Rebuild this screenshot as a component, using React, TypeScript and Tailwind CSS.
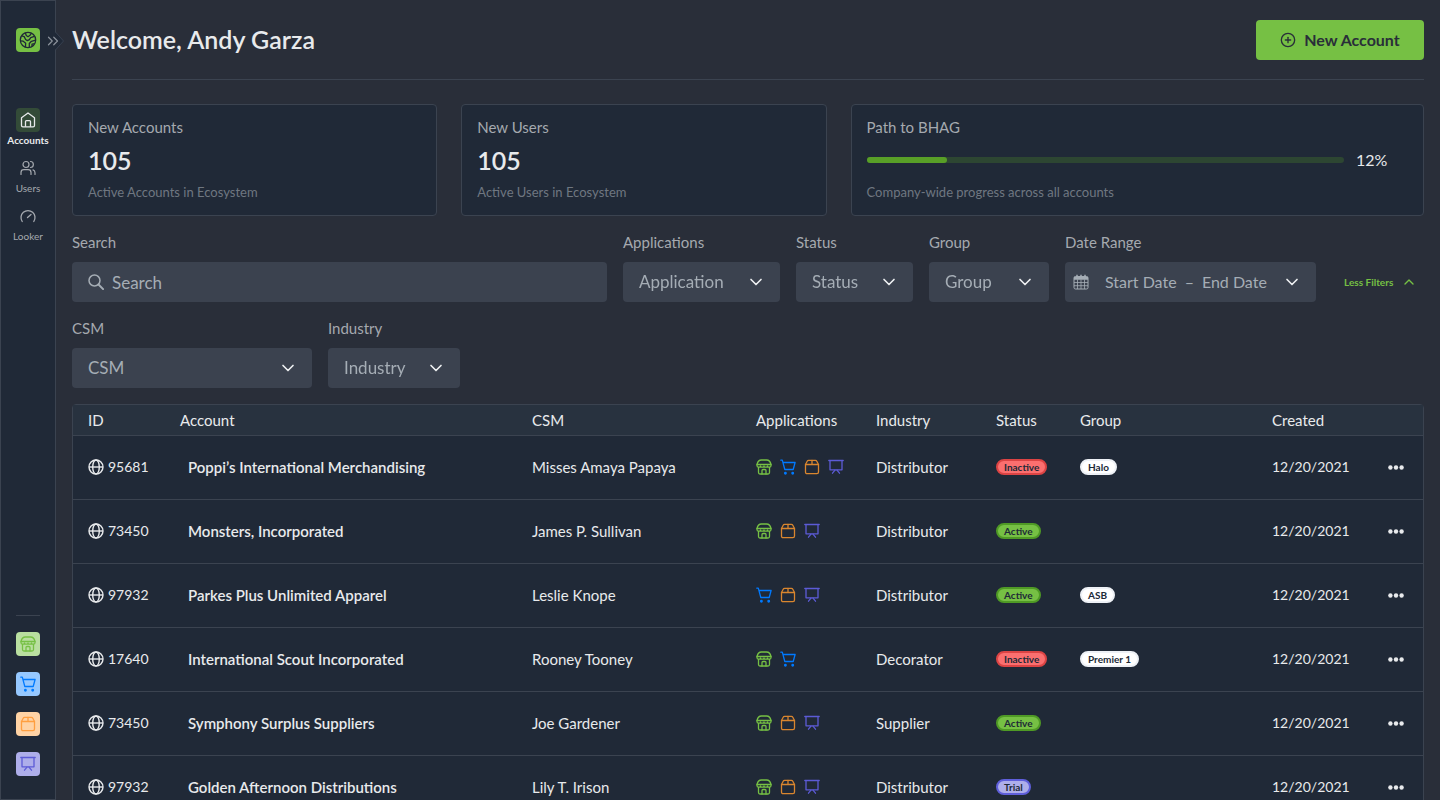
import React from "react";
import { ChevronDown, ChevronUp, ChevronsRight, CirclePlus } from "lucide-react";

type AppName = "store" | "cart" | "box" | "board";

const appColors: Record<AppName, string> = {
  store: "text-[#76c044]",
  cart: "text-[#007aff]",
  box: "text-[#d9862f]",
  board: "text-[#5c5bd6]",
};

const shortcuts: { app: AppName; label: string; className: string }[] = [
  { app: "store", label: "Stores", className: "bg-[#b9dfa0] text-[#76c044]" },
  { app: "cart", label: "Orders", className: "bg-[#96c8ff] text-[#007aff]" },
  { app: "box", label: "Products", className: "bg-[#ffd3a5] text-[#ff9f40]" },
  { app: "board", label: "Presentations", className: "bg-[#aeaeea] text-[#5c5bd6]" },
];

const statusColors: Record<string, string> = {
  Active: "border-[#4f9a25] bg-[#76c044]",
  Inactive: "border-[#dc4444] bg-[#fb6f6f]",
  Trial: "border-[#5f5fdb] bg-[#aeaeea]",
};

const accounts: {
  id: string;
  name: string;
  csm: string;
  apps: AppName[];
  industry: string;
  status: string;
  group?: string;
}[] = [
  { id: "95681", name: "Poppi’s International Merchandising", csm: "Misses Amaya Papaya", apps: ["store", "cart", "box", "board"], industry: "Distributor", status: "Inactive", group: "Halo" },
  { id: "73450", name: "Monsters, Incorporated", csm: "James P. Sullivan", apps: ["store", "box", "board"], industry: "Distributor", status: "Active" },
  { id: "97932", name: "Parkes Plus Unlimited Apparel", csm: "Leslie Knope", apps: ["cart", "box", "board"], industry: "Distributor", status: "Active", group: "ASB" },
  { id: "17640", name: "International Scout Incorporated", csm: "Rooney Tooney", apps: ["store", "cart"], industry: "Decorator", status: "Inactive", group: "Premier 1" },
  { id: "73450", name: "Symphony Surplus Suppliers", csm: "Joe Gardener", apps: ["store", "box", "board"], industry: "Supplier", status: "Active" },
  { id: "97932", name: "Golden Afternoon Distributions", csm: "Lily T. Irison", apps: ["store", "box", "board"], industry: "Distributor", status: "Trial" },
];

function AppIcon({ app }: { app: AppName }) {
  return (
    <svg
      className="size-4 shrink-0"
      viewBox="0 0 16 16"
      fill="none"
      stroke="currentColor"
      strokeWidth="1.3"
      strokeLinecap="round"
      strokeLinejoin="round"
      aria-hidden="true"
    >
      {app === "store" && (
        <>
          <path d="M1 5.5C1.600 2.800 3.400 1 5.400 1h5.200c2 0 3.800 1.800 4.400 4.500z" />
          <path d="M1 5.500v1.200c0 1 1 1.500 1.800 1.500s1.700-.5 1.700-1.300c0 .8.900 1.300 1.750 1.300S8 7.700 8 6.900c0 .8.900 1.300 1.750 1.300s1.750-.5 1.750-1.300c0 .8.900 1.300 1.700 1.300S15 7.700 15 6.700V5.500" />
          <path d="M2.500 8.500v5c0 1 .5 1.500 1.500 1.500h8c1 0 1.500-.5 1.500-1.500v-5" />
          <path d="M6 15v-3.500c0-.6.4-1 1-1h2c.6 0 1 .4 1 1V15" />
        </>
      )}
      {app === "cart" && (
        <>
          <path d="M.8 1.200h1.500l2.500 9.300h8.400l1.900-7H3" />
          <circle cx="5.400" cy="14.200" r=".8" fill="currentColor" />
          <circle cx="12.700" cy="14.200" r=".8" fill="currentColor" />
        </>
      )}
      {app === "box" && (
        <>
          <path d="M1.500 5.500 3.200 2.200c.3-.6.800-.8 1.400-.8h6.800c.6 0 1.100.2 1.400.8l1.700 3.300v7.500c0 1-.6 1.600-1.600 1.600H3.100c-1 0-1.600-.6-1.600-1.600z" />
          <path d="M1.500 5.500h13M8 1.400v4" />
        </>
      )}
      {app === "board" && (
        <>
          <path d="M.8 1.500h14.400M2 1.500v9.300h12V1.500" />
          <path d="m7 11.200-2.500 3M9 11.200l2.500 3" />
        </>
      )}
    </svg>
  );
}

function GlobeIcon() {
  return (
    <svg className="size-4 shrink-0" viewBox="0 0 16 16" fill="none" stroke="currentColor" strokeWidth="1.4" aria-hidden="true">
      <circle cx="8" cy="8" r="7" />
      <ellipse cx="8" cy="8" rx="3.300" ry="7" />
      <path d="M1 8h14" />
    </svg>
  );
}

function StatCard({ title, note }: { title: string; note: string }) {
  return (
    <section className="rounded border border-[#3b4350] bg-[#202937] px-[15px] pt-3 pb-[13px]">
      <h2 className="text-[15px] leading-5 text-[#a5a9af]">{title}</h2>
      <p className="mt-[7px] text-[25px] leading-8 font-semibold text-[#e8eaec]">105</p>
      <p className="mt-1.5 text-[13px] leading-5 text-[#6f7781]">{note}</p>
    </section>
  );
}

function SelectField({ label, option, className }: { label: string; option: string; className: string }) {
  const id = `filter-${label.toLowerCase()}`;
  return (
    <div className={className}>
      <label htmlFor={id} className="block text-[15px] leading-5 text-[#a5a9af]">
        {label}
      </label>
      <div className="relative mt-[10px]">
        <select id={id} className="h-10 w-full appearance-none rounded bg-[#3b424f] px-4 text-[17px] text-[#a5adb5]">
          <option>{option}</option>
        </select>
        <ChevronDown className="pointer-events-none absolute top-2.5 right-3.5 size-5 text-[#eef0f2]" />
      </div>
    </div>
  );
}

function NavItem({ label, active, children }: { label: string; active?: boolean; children: React.ReactNode }) {
  return (
    <a
      href="#"
      className={
        active
          ? "flex h-10 flex-col items-center text-[10px] leading-4 font-bold text-[#e8eaec]"
          : "flex h-10 flex-col items-center text-[10px] leading-4 text-[#a5a9af]"
      }
    >
      <span className={active ? "flex size-6 items-center justify-center rounded bg-[#334b38]" : "flex size-6 items-center justify-center"}>
        {children}
      </span>
      {label}
    </a>
  );
}

function Sidebar() {
  return (
    <aside className="sticky top-0 flex h-screen w-14 shrink-0 flex-col items-center border border-[#3b4350] bg-[#202937] pt-[27px] pb-[23px]">
      <a href="#" aria-label="Home" className="flex size-6 items-center justify-center rounded bg-[#76c044] text-[#202937]">
        <svg className="size-[18px]" viewBox="0 0 18 18" fill="none" stroke="currentColor" strokeWidth="1.300" strokeLinejoin="round" aria-hidden="true">
          <circle cx="9" cy="9" r="7.700" />
          <path d="M2.800 4.800 5.200 5.600 6.600 8.500 8.400 9.600 10.400 8.600 11.700 6.600 15.400 5.400" />
          <path d="M6.300 1.900 7.300 4.500 9 5.700 11 4.300 12.400 2.200" />
          <path d="M1.400 9.800 4.200 10.200 6.700 12.200 6.400 16.200" />
          <path d="M16.600 9.200 12.400 10.300 10.300 12.500 10.300 16.600M13 15.600v-2.400l2.700-.6" />
        </svg>
      </a>
      <button aria-label="Expand menu" className="absolute top-7 left-[47px] flex h-6 w-4 items-center text-[#8b929b]">
        <svg className="h-6 w-4" viewBox="0 0 16 24" fill="none" aria-hidden="true">
          <path d="M7 3v18l8.500-9z" fill="#202937" />
          <path d="M7.500 3 15.500 12 7.500 21" stroke="#364150" />
        </svg>
        <ChevronsRight className="absolute left-[-4px] size-[18px]" strokeWidth={1.6} />
      </button>

      <nav aria-label="Main" className="mt-14 flex flex-col gap-2">
        <NavItem label="Accounts" active>
          <svg className="size-4" viewBox="0 0 16 16" fill="none" stroke="currentColor" strokeWidth="1.300" strokeLinejoin="round" aria-hidden="true">
            <path d="M1.500 5.800 8 1l6.500 4.800v7.600c0 .9-.5 1.400-1.400 1.400H2.900c-.9 0-1.400-.5-1.400-1.400z" />
            <path d="M5.500 14.800V9.600c0-.6.4-1 1-1h3c.6 0 1 .4 1 1v5.200" />
          </svg>
        </NavItem>
        <NavItem label="Users">
          <svg className="size-4" viewBox="0 0 16 16" fill="none" stroke="currentColor" strokeWidth="1.200" strokeLinecap="round" aria-hidden="true">
            <circle cx="6" cy="4.500" r="3" />
            <path d="M1 14.500v-2c0-1.700 1.200-2.800 2.800-2.800h4.400c1.600 0 2.800 1.100 2.800 2.800v2M10.500 1.500c3.800 0 3.800 6 0 6M13 9.900c1.400.4 2 1.400 2 2.800v1.800" />
          </svg>
        </NavItem>
        <NavItem label="Looker">
          <svg className="size-4" viewBox="0 0 16 16" fill="none" stroke="currentColor" strokeWidth="1.300" strokeLinecap="round" aria-hidden="true">
            <path d="M2.200 13.500a7 7 0 1 1 11.600 0M7.500 9.500l3.500-3" />
          </svg>
        </NavItem>
      </nav>

      <div className="mt-auto flex flex-col gap-4 border-t border-[#3b4350] pt-4">
        {shortcuts.map((s) => (
          <a key={s.app} href="#" aria-label={s.label} className={`flex size-6 items-center justify-center rounded ${s.className}`}>
            <AppIcon app={s.app} />
          </a>
        ))}
      </div>
    </aside>
  );
}

function AccountsTable() {
  return (
    <div className="mt-4 rounded-t border border-[#3b4350] bg-[#202937]">
      <table className="w-full table-fixed text-left text-[15px] leading-5 text-[#e8eaec]">
        <colgroup>
          <col className="w-[107px]" />
          <col />
          <col className="w-[224px]" />
          <col className="w-[120px]" />
          <col className="w-[120px]" />
          <col className="w-[84px]" />
          <col className="w-[192px]" />
          <col className="w-[116px]" />
          <col className="w-[35px]" />
        </colgroup>
        <thead>
          <tr className="h-[30px] border-b border-[#3b4350] bg-[#28323f]">
            <th className="pl-[15px] font-normal">ID</th>
            <th className="font-normal">Account</th>
            <th className="font-normal">CSM</th>
            <th className="font-normal">Applications</th>
            <th className="font-normal">Industry</th>
            <th className="font-normal">Status</th>
            <th className="font-normal">Group</th>
            <th className="font-normal">Created</th>
            <th aria-label="Actions"></th>
          </tr>
        </thead>
        <tbody>
          {accounts.map((account, i) => (
            <tr key={i} className="h-16 border-b border-[#3b4350]">
              <td className="pl-[15px] text-sm">
                <div className="flex items-center gap-1">
                  <GlobeIcon />
                  {account.id}
                </div>
              </td>
              <td className="pl-2 font-semibold">{account.name}</td>
              <td>{account.csm}</td>
              <td>
                <div className="flex gap-2">
                  {account.apps.map((app) => (
                    <span key={app} className={appColors[app]}>
                      <AppIcon app={app} />
                    </span>
                  ))}
                </div>
              </td>
              <td>{account.industry}</td>
              <td>
                <span className={`flex h-4 w-fit items-center rounded-full border-2 px-1.5 text-[10px] font-bold text-[#202937] ${statusColors[account.status]}`}>
                  {account.status}
                </span>
              </td>
              <td>
                {account.group && (
                  <span className="flex h-4 w-fit items-center rounded-full border-2 border-[#eef1f6] bg-white px-1.5 text-[10px] font-bold text-[#202937]">
                    {account.group}
                  </span>
                )}
              </td>
              <td className="text-sm">12/20/2021</td>
              <td>
                <button aria-label="Row actions" className="flex size-4 items-center">
                  <svg className="size-4" viewBox="0 0 16 16" fill="currentColor" aria-hidden="true">
                    <circle cx="2.400" cy="8.500" r="2.200" />
                    <circle cx="8" cy="8.500" r="2.200" />
                    <circle cx="13.600" cy="8.500" r="2.200" />
                  </svg>
                </button>
              </td>
            </tr>
          ))}
        </tbody>
      </table>
    </div>
  );
}

function App() {
  return (
    <div className="flex h-screen overflow-hidden bg-[#292e39] font-['Lato',sans-serif]">
      <Sidebar />

      <main className="min-w-0 flex-1 px-4">
        <header className="flex h-20 items-center justify-between border-b border-[#3b4350]">
          <h1 className="text-[25px] font-semibold text-[#e8eaec]">Welcome, Andy Garza</h1>
          <button className="flex h-10 w-42 items-center justify-center gap-2 rounded bg-[#76c044] text-base font-bold text-[#292e39]">
            <CirclePlus className="size-4" strokeWidth={2} />
            New Account
          </button>
        </header>

        <div className="mt-6 grid grid-cols-[365fr_365fr_573fr] gap-6">
          <StatCard title="New Accounts" note="Active Accounts in Ecosystem" />
          <StatCard title="New Users" note="Active Users in Ecosystem" />
          <section className="rounded border border-[#3b4350] bg-[#202937] px-[15px] pt-3 pb-[13px]">
            <h2 className="text-[15px] leading-5 text-[#a5a9af]">Path to BHAG</h2>
            <div className="mt-[7px] flex h-8 items-center gap-3 pr-5">
              <div className="h-1.5 flex-1 rounded-full bg-[#2d4632]">
                <div className="h-1.5 w-20 rounded-full bg-[#589f27]"></div>
              </div>
              <span className="w-8 text-base text-[#e8eaec]">12%</span>
            </div>
            <p className="mt-1.5 text-[13px] leading-5 text-[#6f7781]">Company-wide progress across all accounts</p>
          </section>
        </div>

        <form className="mt-4 flex flex-wrap gap-4">
          <div className="flex-1">
            <label htmlFor="search" className="block text-[15px] leading-5 text-[#a5a9af]">
              Search
            </label>
            <div className="relative mt-[10px]">
              <svg
                className="absolute top-3 left-4 size-4 text-[#a5adb5]"
                viewBox="0 0 16 16"
                fill="none"
                stroke="currentColor"
                aria-hidden="true"
              >
                <circle cx="6.500" cy="6.500" r="5.500" strokeWidth="1.500" />
                <path d="m10.500 10.500 4.600 4.600" strokeWidth="2" strokeLinecap="round" />
              </svg>
              <input
                id="search"
                type="text"
                placeholder="Search"
                className="h-10 w-full rounded bg-[#3b424f] pr-4 pl-10 text-[17px] text-[#e8eaec] placeholder:text-[#a5adb5]"
              />
            </div>
          </div>
          <SelectField label="Applications" option="Application" className="w-[157px]" />
          <SelectField label="Status" option="Status" className="w-[117px]" />
          <SelectField label="Group" option="Group" className="w-[120px]" />
          <div className="w-[251px]">
            <span id="date-range" className="block text-[15px] leading-5 text-[#a5a9af]">
              Date Range
            </span>
            <button
              type="button"
              aria-labelledby="date-range"
              className="mt-[10px] flex h-10 w-full items-center rounded bg-[#3b424f] pr-3.5 pl-2 text-base text-[#a5adb5]"
            >
              <svg className="size-4" viewBox="0 0 16 16" fill="none" stroke="currentColor" aria-hidden="true">
                <rect x="1" y="2.500" width="14" height="12.500" rx="1.500" />
                <path d="M1 3.500h14M1 5h14" strokeWidth="1.500" />
                <path d="M1 8.500h14M1 11.700h14M4.500 5.500V15M8 5.500V15M11.500 5.500V15" strokeWidth=".8" />
                <path d="M4 .8v3M8 .8v3M12 .8v3" strokeWidth="1.500" />
              </svg>
              <span className="ml-4">Start Date</span>
              <span className="mx-2">–</span>
              <span>End Date</span>
              <ChevronDown className="ml-auto size-5 text-[#eef0f2]" />
            </button>
          </div>
          <button type="button" className="mt-[30px] ml-3 flex h-10 w-20 items-center gap-2 text-[10px] font-bold whitespace-nowrap text-[#76c044]">
            Less Filters
            <ChevronUp className="size-4" />
          </button>
          <div className="flex w-full gap-4">
            <SelectField label="CSM" option="CSM" className="w-60" />
            <SelectField label="Industry" option="Industry" className="w-[132px]" />
          </div>
        </form>

        <AccountsTable />
      </main>
    </div>
  );
}

export default App;
